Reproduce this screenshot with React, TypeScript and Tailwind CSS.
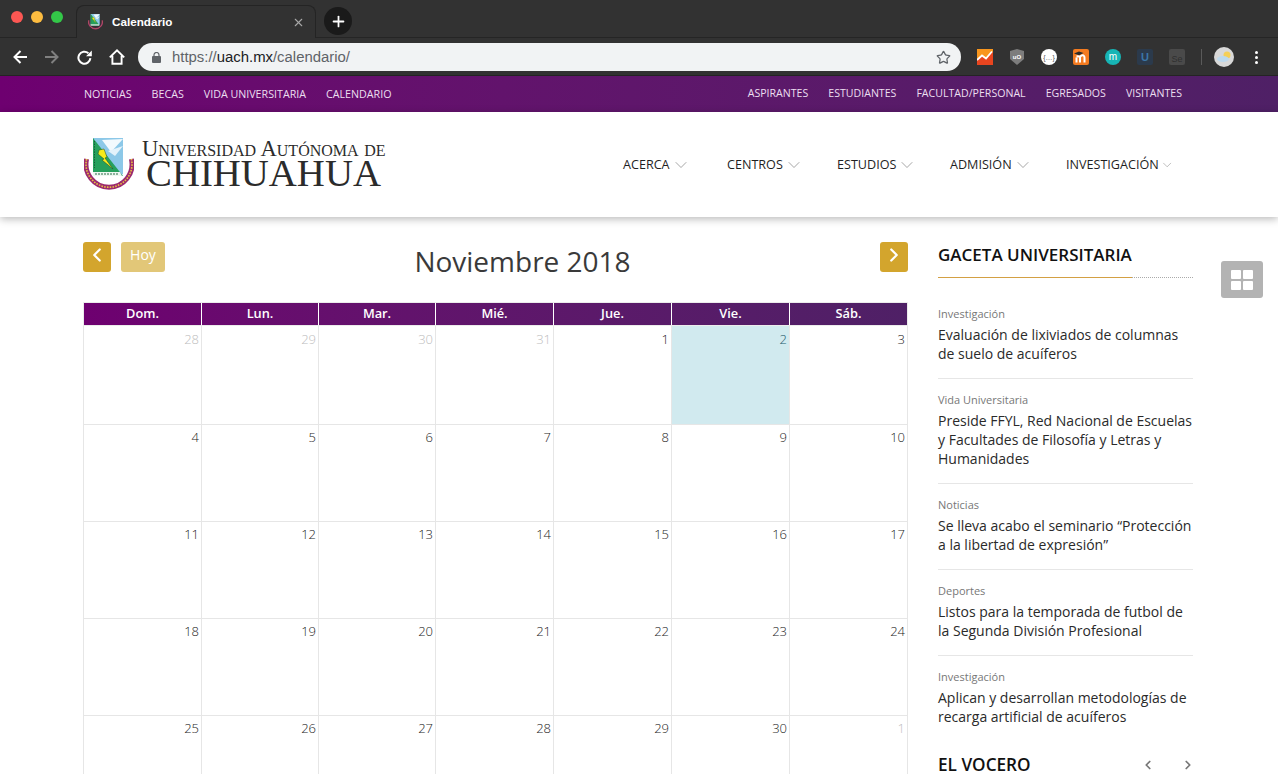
import React from "react";
import { ChevronDown, ChevronLeft, ChevronRight, Star, X, Plus } from "lucide-react";

const topLeft = ["NOTICIAS", "BECAS", "VIDA UNIVERSITARIA", "CALENDARIO"];
const topRight = ["ASPIRANTES", "ESTUDIANTES", "FACULTAD/PERSONAL", "EGRESADOS", "VISITANTES"];
const menu = [
  { t: "ACERCA", w: "w-[104px]" },
  { t: "CENTROS", w: "w-[110px]" },
  { t: "ESTUDIOS", w: "w-[113px]" },
  { t: "ADMISIÓN", w: "w-[116px]" },
  { t: "INVESTIGACIÓN", w: "w-[108px]" },
];
const days = ["Dom.", "Lun.", "Mar.", "Mié.", "Jue.", "Vie.", "Sáb."];
const rows: { n: number; muted?: boolean; today?: boolean }[][] = [
  [{ n: 28, muted: true }, { n: 29, muted: true }, { n: 30, muted: true }, { n: 31, muted: true }, { n: 1 }, { n: 2, today: true }, { n: 3 }],
  [4, 5, 6, 7, 8, 9, 10].map((n) => ({ n })),
  [11, 12, 13, 14, 15, 16, 17].map((n) => ({ n })),
  [18, 19, 20, 21, 22, 23, 24].map((n) => ({ n })),
  [{ n: 25 }, { n: 26 }, { n: 27 }, { n: 28 }, { n: 29 }, { n: 30 }, { n: 1, muted: true }],
];
const rowH = ["h-[99px]", "h-[97px]", "h-[97px]", "h-[97px]", "h-[97px]"];
const cols = "grid grid-cols-[118px_117px_117px_118px_118px_118px_119px]";
const news = [
  { c: "Investigación", t: "Evaluación de lixiviados de columnas de suelo de acuíferos" },
  { c: "Vida Universitaria", t: "Preside FFYL, Red Nacional de Escuelas y Facultades de Filosofía y Letras y Humanidades" },
  { c: "Noticias", t: "Se lleva acabo el seminario “Protección a la libertad de expresión”" },
  { c: "Deportes", t: "Listos para la temporada de futbol de la Segunda División Profesional" },
  { c: "Investigación", t: "Aplican y desarrollan metodologías de recarga artificial de acuíferos" },
];

function Emblem({ size = 50 }: { size?: number }) {
  return (
    <svg width={size} height={size * 1.06} viewBox="0 0 50 53" className="shrink-0">
      <path d="M2.6 21A23 23 0 1 0 47.4 21" fill="none" stroke="#9c2a6e" strokeWidth="5" />
      <path d="M2.6 21A23 23 0 1 0 47.4 21" fill="none" stroke="#e9c23f" strokeWidth="1.6" strokeDasharray="1.6 1.2" />
      <path d="M9 0H39V36L36 38H9Z" fill="#8cc8e8" />
      <path d="M9 0L39 38H9Z" fill="#26a05c" />
      <path d="M18 2L39 1L27 14Z" fill="#f2f9fd" />
      <path d="M24 13L39 8L31 18Z" fill="#e3f2fb" />
      <path d="M9 34H36L38 38H9Z" fill="#eef7f1" />
      <path d="M11 36H35" stroke="#2c6b47" strokeWidth="1" strokeDasharray="2 1" />
      <path d="M15 12L20 11L23 19L21 20L29 31L18 22L20 21L14 16Z" fill="#f6ea1c" stroke="#17462b" strokeWidth="0.5" />
      <path d="M10.5 3V30" stroke="#14492c" strokeWidth="0.8" strokeDasharray="1.4 1.2" />
    </svg>
  );
}

function ExtIcon({ children, className = "" }: { children: React.ReactNode; className?: string }) {
  return <div className={`w-4 h-4 flex items-center justify-center rounded-[2px] shrink-0 ${className}`}>{children}</div>;
}

function BrowserChrome() {
  return (
    <div className="bg-[#323232] h-[76px] flex flex-col border-b border-[#242424]" style={{ fontFamily: "'Liberation Sans', Arial, sans-serif" }}>
      <div className="h-[38px] flex items-end relative border-b border-[#252525]">
        <div className="flex items-center gap-[8px] pl-[11px] h-full pb-[3px] w-[76px]">
          <span className="w-3 h-3 rounded-full bg-[#fc5753]" />
          <span className="w-3 h-3 rounded-full bg-[#fdbc40]" />
          <span className="w-3 h-3 rounded-full bg-[#33c748]" />
        </div>
        <div className="w-[240px] h-[33px] bg-[#323232] rounded-t-[8px] border border-b-0 border-[#242424] flex items-center pl-[11px] pr-[10px] -mb-px">
          <Emblem size={15} />
          <span className="ml-[9px] text-[11.7px] font-bold text-white flex-1">Calendario</span>
          <X size={13} className="text-[#a8a8a8]" />
        </div>
        <div className="w-7 h-7 ml-[8px] mb-[2px] rounded-full bg-[#1a1a1a] flex items-center justify-center">
          <Plus size={17} strokeWidth={2.5} className="text-white" />
        </div>
      </div>
      <div className="h-[37px] flex items-center pt-[1px]">
        <div className="flex items-center gap-[18px] pl-[13px] w-[138px]">
          <svg width="14" height="14" viewBox="0 0 14 14" fill="none" stroke="#fff" strokeWidth="2"><path d="M14 7H1.5M7.5 1L1.5 7L7.5 13" /></svg>
          <svg width="14" height="14" viewBox="0 0 14 14" fill="none" stroke="#808080" strokeWidth="2"><path d="M0 7H12.5M6.5 1L12.5 7L6.5 13" /></svg>
          <svg width="15" height="15" viewBox="0 0 15 15"><path d="M13.4 8.2A6 6 0 1 1 11.4 3.2" fill="none" stroke="#fff" strokeWidth="2" /><path d="M9 6.2H14.8V0.4Z" fill="#fff" /></svg>
          <svg width="16" height="16" viewBox="0 0 16 16" fill="none" stroke="#fff" strokeWidth="1.9" className="-ml-[1px]"><path d="M0.8 8.4L8 1.4L15.2 8.4M3.4 6.8V14.8H12.6V6.8" /></svg>
        </div>
        <div className="w-[823px] h-[28px] bg-[#f1f3f4] rounded-full flex items-center pl-[14px] pr-[10px]">
          <svg width="9" height="11" viewBox="0 0 9 11" className="shrink-0"><rect x="0" y="4" width="9" height="7" rx="1" fill="#5f6368" /><path d="M2 4.5V3a2.5 2.5 0 0 1 5 0v1.5" fill="none" stroke="#5f6368" strokeWidth="1.2" /></svg>
          <span className="ml-[11px] text-[14.9px] flex-1 text-[#5f6368]">
            https://<span className="text-[#202124]">uach.mx</span>/calendario/
          </span>
          <Star size={15} strokeWidth={2} className="text-[#5f6368]" />
        </div>
        <div className="flex items-center ml-[16px] gap-[16px]">
          <ExtIcon>
            <svg width="16" height="16" viewBox="0 0 16 16"><path d="M0 0H16V16H0Z" fill="#f8961e" /><path d="M0 16V11L5 7L9 10L15 3L16 3V16Z" fill="#e8451f" /><path d="M0 11L5 6.5L9 9.5L15 2.5" fill="none" stroke="#fff" strokeWidth="1.8" /></svg>
          </ExtIcon>
          <ExtIcon>
            <svg width="14" height="16" viewBox="0 0 14 16"><path d="M0 2L7 0L14 2V10L7 16L0 10Z" fill="#7d7d7d" /><text x="7" y="9.5" textAnchor="middle" fontSize="6" fontWeight="700" fill="#fff">uO</text></svg>
          </ExtIcon>
          <ExtIcon className="!rounded-full bg-white">
            <span className="text-[7px] text-[#555] leading-none">{"{…}"}</span>
          </ExtIcon>
          <ExtIcon>
            <svg width="16" height="16" viewBox="0 0 16 16"><rect width="16" height="16" rx="2" fill="#f47b20" /><path d="M3.5 13.5V8.5M7 13.5V8.5C7 6.5 9.8 5.5 11 7C11.4 7.5 11.5 8 11.5 8.8V13.5M7 9C7 7.5 5.8 7 3.5 7.5" fill="none" stroke="#fff" strokeWidth="2" /><path d="M1 4.5L6 2.5L10.5 4L6 6.2Z" fill="#2b2b2b" /></svg>
          </ExtIcon>
          <ExtIcon className="!rounded-full bg-[#17b5b5]">
            <span className="text-[10px] text-white leading-none">m</span>
          </ExtIcon>
          <ExtIcon className="bg-[#2b3a4c]">
            <span className="text-[11px] font-bold text-[#3c76a8] leading-none">U</span>
          </ExtIcon>
          <ExtIcon className="bg-[#4a4a4a]">
            <span className="text-[9px] text-[#2f2f2f] leading-none pt-1">Se</span>
          </ExtIcon>
        </div>
        <div className="w-px h-4 bg-[#5a5a5a] ml-[16px]" />
        <div className="w-5 h-5 rounded-full bg-[#d8d8d8] ml-[12px] flex items-center justify-center overflow-hidden">
          <svg width="20" height="20" viewBox="0 0 20 20"><circle cx="13" cy="8" r="3.5" fill="#f5cf57" /><ellipse cx="9" cy="12" rx="6" ry="3" fill="#bcd9ee" /></svg>
        </div>
        <div className="ml-[21px] flex flex-col gap-[2px]">
          <span className="w-[3px] h-[3px] rounded-full bg-white" />
          <span className="w-[3px] h-[3px] rounded-full bg-white" />
          <span className="w-[3px] h-[3px] rounded-full bg-white" />
        </div>
      </div>
    </div>
  );
}

export default function App() {
  return (
    <div className="w-[1278px] h-[774px] overflow-hidden bg-white relative" style={{ fontFamily: "'Open Sans', sans-serif" }}>
      <BrowserChrome />
      <div className="h-[36px] bg-gradient-to-r from-[#6e0070] to-[#4f2066] flex items-center justify-between pl-[84px] pr-[96px] text-[#ecdff0]">
        <div className="flex gap-[20px] text-[10.7px]">{topLeft.map((t) => <span key={t}>{t}</span>)}</div>
        <div className="flex gap-[20px] text-[10.6px]">{topRight.map((t) => <span key={t}>{t}</span>)}</div>
      </div>
      <header className="h-[105px] bg-white flex items-center justify-between pl-[84px] pr-[104px] shadow-[0_2px_8px_rgba(0,0,0,0.28)] relative">
        <div className="flex items-center">
          <Emblem size={50} />
          <div className="ml-[8px] pb-[6px] text-[#2b2b2b]" style={{ fontFamily: "'Liberation Serif', serif" }}>
            <div className="text-[22.6px] leading-[22px] [font-variant:small-caps] whitespace-nowrap">Universidad Autónoma de</div>
            <div className="text-[38.8px] leading-[26px] ml-[4px] whitespace-nowrap">CHIHUAHUA</div>
          </div>
        </div>
        <nav className="flex items-center text-[12.6px] font-medium text-[#1f1f1f] pt-[2px]">
          {menu.map((m) => (
            <div key={m.t} className={`flex items-center gap-[1px] ${m.w}`}>
              <span>{m.t}</span>
              <ChevronDown size={20} strokeWidth={0.7} className="text-[#666] mb-[2px]" />
            </div>
          ))}
        </nav>
      </header>

      <main className="flex pl-[83px] pt-[25px]">
        <section className="w-[825px] shrink-0">
          <div className="flex h-[60px] items-start">
            <button className="w-[28px] h-[30px] rounded-[3px] bg-[#d3a52d] flex items-center justify-center text-white pb-[5px]">
              <ChevronLeft size={22} strokeWidth={2.4} />
            </button>
            <button className="ml-[10px] w-[44px] h-[30px] rounded-[3px] bg-[#e2c778] text-white text-[14px] leading-[25px] pb-[5px]">Hoy</button>
            <h1 className="flex-1 text-center text-[28px] leading-[40px] text-[#3a3a3a] -mt-[1px]">Noviembre 2018</h1>
            <button className="w-[28px] h-[30px] rounded-[3px] bg-[#d3a52d] flex items-center justify-center text-white pb-[5px]">
              <ChevronRight size={22} strokeWidth={2.4} />
            </button>
          </div>
          <div className="h-[24px] border border-[#ececec]">
            <div className="grid grid-cols-[117px_117px_117px_118px_118px_118px_118px] h-[22px] bg-gradient-to-r from-[#6e0070] to-[#4f2066]">
              {days.map((d, i) => (
                <div key={d} className={`text-center text-[12.8px] leading-[21px] font-semibold text-white ${i ? "border-l border-white" : ""}`}>{d}</div>
              ))}
            </div>
          </div>
          {rows.map((r, ri) => (
            <div key={ri} className={`${cols} ${rowH[ri]} border-b border-[#e6e6e6]`}>
              {r.map((c, i) => (
                <div
                  key={i}
                  className={`text-right pr-[2px] ${ri === 0 ? "pt-[4px]" : "pt-[3px]"} text-[13px] leading-[18px] font-light border-l border-[#e6e6e6] ${i === 6 ? "border-r" : ""} ${c.today ? "bg-[#d1eaef] text-[#1f5a6b]" : c.muted ? "text-[#bdbdbd]" : "text-[#1c1c1c]"}`}
                >
                  {c.n}
                </div>
              ))}
            </div>
          ))}
        </section>

        <aside className="w-[255px] ml-[30px] shrink-0">
          <h2 className="text-[17px] leading-[26px] font-semibold text-[#111]">GACETA UNIVERSITARIA</h2>
          <div className="mt-[9px] border-b border-dotted border-[#aaa] relative h-[1px]">
            <div className="absolute left-0 top-0 h-px w-[194px] bg-[#d3a043]" />
          </div>
          <div className="mt-[28px]">
            {news.map((n, i) => (
              <article key={i} className={i < news.length - 1 ? "border-b border-[#e6e6e6] pb-[15px] mb-[13px]" : ""}>
                <div className="text-[11px] leading-[16px] text-[#777]">{n.c}</div>
                <div className="mt-[3px] text-[14px] leading-[19px] text-[#2a2a2a]">{n.t}</div>
              </article>
            ))}
          </div>
          <div className="mt-[26px] flex items-center -mr-[2px]">
            <h2 className="flex-1 whitespace-nowrap text-[17.2px] leading-[26px] font-semibold text-[#111]">EL VOCERO</h2>
            <div className="flex gap-[26px] text-[#777]">
              <ChevronLeft size={14} strokeWidth={3} />
              <ChevronRight size={14} strokeWidth={3} />
            </div>
          </div>
        </aside>
      </main>

      <div className="absolute left-[1221px] top-[261px] w-[42px] h-[37px] rounded-[3px] bg-[#b3b3b3] grid grid-cols-2 gap-[2px] pl-[10px] pr-[10px] pt-[9px] pb-[8px]">
        <span className="bg-white rounded-[1px]" />
        <span className="bg-white rounded-[1px]" />
        <span className="bg-white rounded-[1px]" />
        <span className="bg-white rounded-[1px]" />
      </div>
    </div>
  );
}
